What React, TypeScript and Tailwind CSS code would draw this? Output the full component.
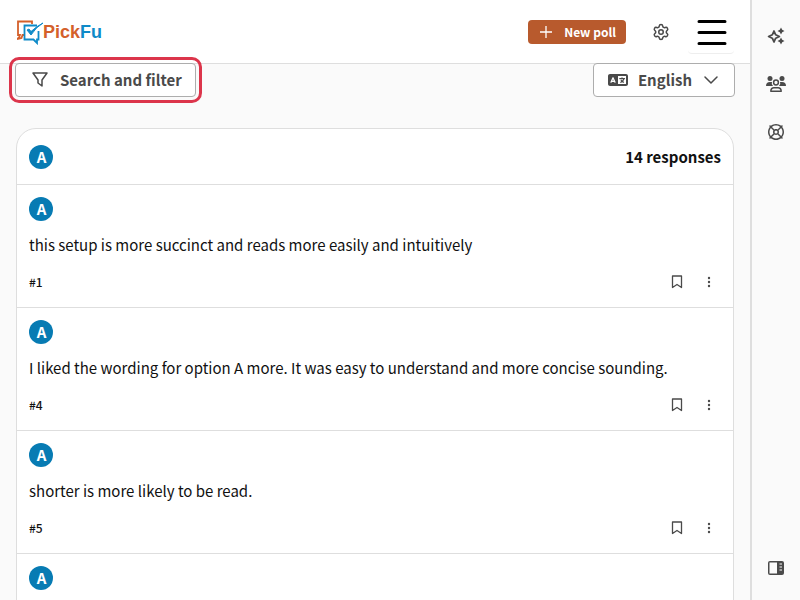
import { useState } from "react";
import { Settings } from "lucide-react";
import { FaLanguage, FaRegLifeRing } from "react-icons/fa6";

type Response = { id: number; text?: string };

const responses: Response[] = [
  { id: 1, text: "this setup is more succinct and reads more easily and intuitively" },
  { id: 4, text: "I liked the wording for option A more. It was easy to understand and more concise sounding." },
  { id: 5, text: "shorter is more likely to be read." },
  { id: 6 },
];

function OptionBadge() {
  return (
    <span className="flex size-6 shrink-0 items-center justify-center rounded-full bg-[#077bb3] pl-px text-[15px] leading-6 font-bold text-white">
      A
    </span>
  );
}

function Logo() {
  return (
    <a href="#" aria-label="PickFu" className="flex items-center">
      <svg viewBox="0 0 26 26" className="size-[26px]" fill="none">
        <path d="M7 16H5.500L4.500 19L0 20Q3 18 3 16H1V2.500H15V5" stroke="#d4602b" strokeWidth="1.800" />
        <path d="M20 6.500H7.500V20.500H16.500L20 24V20.500H21.500V12" stroke="#0e8ac8" strokeWidth="1.800" />
        <path d="M10 11L14 16Q19 8 26 4Q20 7 14 12.500L12 10Z" fill="#0e8ac8" stroke="#0e8ac8" />
      </svg>
      <span className="font-['Liberation_Sans',Arial,sans-serif] text-[18px] leading-6 font-bold text-[#0e8ac8]">
        <span className="text-[#d4602b]">Pick</span>Fu
      </span>
    </a>
  );
}

function Sparkles() {
  return (
    <svg viewBox="0 0 18 18" className="size-[18px]" fill="currentColor">
      <path d="M7 4L8.700 7.800L12.400 9.500L8.700 11.200L7 15L5.300 11.200L1.600 9.500L5.300 7.800Z" fill="none" stroke="currentColor" strokeWidth="1.800" strokeLinejoin="round" />
      <path d="M14 0.500L15.200 2.800L17.500 4L15.200 5.200L14 7.500L12.800 5.200L10.500 4L12.800 2.800ZM14 10.500L15.200 12.800L17.500 14L15.200 15.200L14 17.500L12.800 15.200L10.500 14L12.800 12.800Z" />
    </svg>
  );
}

function People() {
  return (
    <svg viewBox="0 0 20 18" className="h-[18px] w-5" fill="currentColor">
      <circle cx="4" cy="3.500" r="2.500" />
      <circle cx="16" cy="3.500" r="2.500" />
      <path d="M0 11Q0 7 4 7H6Q5 9 7 11ZM20 11Q20 7 16 7H14Q15 9 13 11Z" />
      <circle cx="10" cy="7.500" r="2.400" fill="none" stroke="currentColor" strokeWidth="1.500" />
      <path d="M4.800 16.200Q5 12.800 8 12.800H12Q15 12.800 15.200 16.200Z" fill="none" stroke="currentColor" strokeWidth="1.500" strokeLinejoin="round" />
    </svg>
  );
}

function PanelIcon() {
  return (
    <svg viewBox="0 0 16 14" className="h-3.5 w-4">
      <rect width="16" height="14" rx="2" fill="currentColor" />
      <rect x="1.500" y="1.500" width="7.500" height="11" fill="#fafafa" />
      <path d="M11.500 3H14M11.500 6H14M11.500 9H14" stroke="#fafafa" strokeWidth="1.200" />
    </svg>
  );
}

function ResponseRow({ id, text }: Response) {
  const [saved, setSaved] = useState(false);
  if (!text) {
    return (
      <li className="h-32 px-3 pt-3">
        <OptionBadge />
      </li>
    );
  }
  return (
    <li className="border-b border-[#dedede] px-3 pt-3 pb-2">
      <OptionBadge />
      <p className="mt-3 text-[15px] leading-6">{text}</p>
      <div className="mt-2 flex h-[34px] items-center justify-between">
        <span className="text-[12px] leading-5 font-medium">#{id}</span>
        <div className="-mr-1 flex items-center text-[#4a4a4a]">
          <button aria-label="Save response" aria-pressed={saved} onClick={() => setSaved(!saved)} className="flex size-8 items-center justify-center">
            <svg viewBox="0 0 12 14" className="h-3.5 w-3" fill={saved ? "currentColor" : "none"} stroke="currentColor" strokeWidth="1.300">
              <path d="M1.500 1H10.500V12.500L6 9.500L1.500 12.500Z" strokeLinejoin="round" />
            </svg>
          </button>
          <button aria-label="Response actions" className="flex size-8 items-center justify-center">
            <svg viewBox="0 0 4 12" className="h-3 w-1" fill="currentColor">
              <circle cx="2" cy="2" r="1.200" />
              <circle cx="2" cy="6" r="1.200" />
              <circle cx="2" cy="10" r="1.200" />
            </svg>
          </button>
        </div>
      </div>
    </li>
  );
}

export default function App() {
  return (
    <div className="flex h-screen overflow-hidden bg-[#fafafa] font-['Noto_Sans_CJK_SC','Noto_Sans',sans-serif] text-[#111]">
      <div className="flex min-w-0 flex-1 flex-col">
        <header className="flex h-16 shrink-0 items-center justify-between border-b border-[#dedede] bg-white pt-px pr-4 pl-[17px]">
          <Logo />
          <div className="flex items-center">
            <button className="flex h-6 items-center gap-3 rounded bg-[#b85a2d] pr-2.5 pl-3 text-[12px] leading-6 font-bold text-white">
              <svg viewBox="0 0 12 12" className="size-3" stroke="currentColor" strokeWidth="1.300">
                <path d="M6 0V12M0 6H12" />
              </svg>
              New poll
            </button>
            <button aria-label="Settings" className="ml-[26px] text-[#4a4a4a]">
              <Settings size={18} />
            </button>
            <button aria-label="Menu" className="ml-[18px] flex h-11 w-[46px] items-center justify-center rounded border-b border-[#eee] pl-px">
              <svg viewBox="0 0 30 28" className="h-7 w-[30px]" stroke="#000" strokeWidth="3" strokeLinecap="round">
                <path d="M2 3.500H28M2 14.500H28M2 25.500H28" />
              </svg>
            </button>
          </div>
        </header>
        <main className="min-h-0 flex-1 px-[15px]">
          <div className="-mt-px flex h-[65px] items-start justify-between text-[#4a4a4a]">
            <button className="flex h-[34px] items-center gap-3 rounded border border-[#adadad] bg-white pr-[13px] pl-4 text-[15px] leading-6 font-bold outline-3 outline-offset-3 outline-[#dc354b]">
              <svg viewBox="0 0 16 16" className="size-4" fill="none" stroke="currentColor" strokeWidth="1.500" strokeLinejoin="round">
                <path d="M1 1H15L10 8V14L6 11V8Z" />
              </svg>
              Search and filter
            </button>
            <button className="flex h-[34px] items-center rounded border border-[#adadad] bg-white pr-4 pl-3.5 text-[15px] leading-6 font-bold">
              <FaLanguage className="mr-2.5 h-4 w-5" />
              English
              <svg viewBox="0 0 14 8" className="ml-3 h-2 w-3.5" fill="none" stroke="currentColor" strokeWidth="1.500" strokeLinecap="round" strokeLinejoin="round">
                <path d="M1 1L7 7L13 1" />
              </svg>
            </button>
          </div>
          <section className="mx-px rounded-t-[20px] border border-[#dedede] bg-white">
            <div className="flex h-14 items-center justify-between border-b border-[#dedede] px-3">
              <OptionBadge />
              <h2 className="text-[15px] leading-6 font-bold">14 responses</h2>
            </div>
            <ul>
              {responses.map((r) => (
                <ResponseRow key={r.id} id={r.id} text={r.text} />
              ))}
            </ul>
          </section>
        </main>
      </div>
      <aside className="flex w-[50px] shrink-0 flex-col items-center border-l-2 border-[#dedede] pt-3 pb-2 text-[#4a4a4a]">
        <button aria-label="AI tools" className="flex size-12 items-center justify-center"><Sparkles /></button>
        <button aria-label="Audience" className="flex size-12 items-center justify-center"><People /></button>
        <button aria-label="Help" className="flex size-12 items-center justify-center"><FaRegLifeRing size={16} /></button>
        <button aria-label="Toggle side panel" className="mt-auto flex size-12 items-center justify-center"><PanelIcon /></button>
      </aside>
    </div>
  );
}
